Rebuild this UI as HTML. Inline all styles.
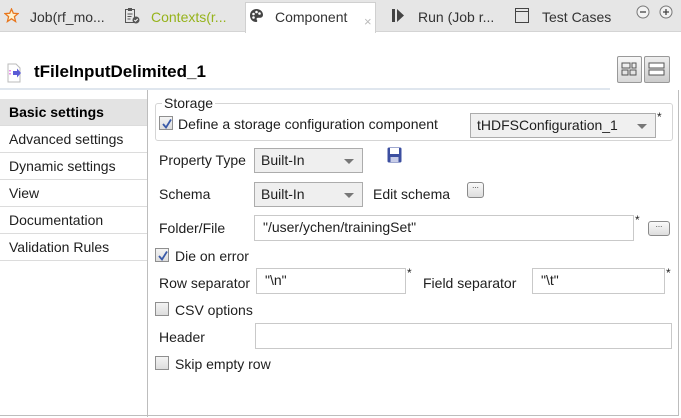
<!DOCTYPE html>
<html><head><style>
*{margin:0;padding:0;box-sizing:border-box}
body{width:681px;height:418px;background:#fff;font-family:"Liberation Sans",sans-serif;font-size:14px;color:#1e1e1e;position:relative;overflow:hidden}
.a{position:absolute;white-space:nowrap}
.tl{line-height:16px}
.inp{position:absolute;border:1px solid #c9c9c9;background:#fff;padding-left:8px;line-height:22px}
.cmb{position:absolute;border:1px solid #acacac;background:#efefef;padding-left:6px;line-height:22px}
.cmb:after{content:"";position:absolute;right:8px;top:10px;border-left:5px solid transparent;border-right:5px solid transparent;border-top:5px solid #777}
.cb{position:absolute;width:14px;height:14px;border:1px solid #8f8f8f;background:linear-gradient(#f4f4f4,#ddd)}
.cb svg{position:absolute;left:1px;top:1px}
.btn{position:absolute;border:1px solid #8a8a8a;border-radius:3px;background:linear-gradient(#fafafa,#ddd);font-size:8px;line-height:6px;text-align:center;color:#333}
.li{position:absolute;left:0;width:147px;height:27px;border-bottom:1px solid #dcdcdc;padding-left:9px;line-height:26px}
</style></head><body>
<!-- tab bar -->
<div class="a" style="left:0;top:0;width:681px;height:32px;background:#e6e6e6;border-bottom:1px solid #d4d4d4"></div>
<div class="a" style="left:245px;top:2px;width:131px;height:31px;background:#fff;border:1px solid #d0d0d0;border-bottom:none"></div>
<svg class="a" style="left:4px;top:8px" width="15" height="15" viewBox="0 0 15 15"><path d="M7.5 1 L9.3 5.3 L14 5.6 L10.4 8.6 L11.6 13.5 L7.5 10.8 L3.4 13.5 L4.6 8.6 L1 5.6 L5.7 5.3 Z" fill="#fff3d0" stroke="#e8771e" stroke-width="1.3"/></svg>
<div class="a tl" style="left:30px;top:9px;color:#333">Job(rf_mo...</div>
<svg class="a" style="left:124px;top:7px" width="16" height="17" viewBox="0 0 16 17"><rect x="1.5" y="2.5" width="9" height="13" fill="none" stroke="#555"/><rect x="4" y="1" width="4" height="3" fill="#555"/><path d="M3.5 7h5M3.5 9.5h4M3.5 12h3" stroke="#555"/><circle cx="12" cy="13" r="3.5" fill="#555"/><path d="M10.3 13l1.2 1.2 2.2-2.3" stroke="#fff" fill="none"/></svg>
<div class="a tl" style="left:151px;top:9px;color:#96b31c">Contexts(r...</div>
<svg class="a" style="left:249px;top:8px" width="15" height="15" viewBox="0 0 15 15"><path d="M7.5 1C3.5 1 1 4 1 7.5S3.5 14 7 14c1.5 0 1.5-1.3.8-2.2-.7-.9 0-2 1.2-2h2c2 0 3-1.3 3-3C14 3.5 11 1 7.5 1z" fill="#444"/><circle cx="4.5" cy="6" r="1.3" fill="#fff"/><circle cx="7.5" cy="4" r="1.3" fill="#fff"/><circle cx="10.5" cy="5.5" r="1.3" fill="#fff"/><circle cx="4.5" cy="9.5" r="1.3" fill="#fff"/></svg>
<div class="a tl" style="left:275px;top:9px;color:#333">Component</div>
<div class="a" style="left:364px;top:14px;color:#bbb;font-size:13px">×</div>
<svg class="a" style="left:392px;top:9px" width="13" height="13" viewBox="0 0 13 13"><rect x="0" y="0" width="3" height="13" fill="#444"/><path d="M5 0 L12 6.5 L5 13Z" fill="#444"/></svg>
<div class="a tl" style="left:418px;top:9px;color:#333">Run (Job r...</div>
<svg class="a" style="left:515px;top:8px" width="14" height="15" viewBox="0 0 14 15"><rect x="0.5" y="0.5" width="13" height="14" fill="none" stroke="#444"/><path d="M0.5 3.5h13" stroke="#444"/></svg>
<div class="a tl" style="left:542px;top:9px;color:#333">Test Cases</div>
<svg class="a" style="left:636px;top:5px" width="40" height="14" viewBox="0 0 40 14"><circle cx="7" cy="7" r="6" fill="#f2f2f2" stroke="#777"/><path d="M4 7h6" stroke="#444" stroke-width="1.3"/><circle cx="30" cy="7" r="6" fill="#f2f2f2" stroke="#777"/><path d="M27 7h6M30 4v6" stroke="#444" stroke-width="1.3"/></svg>
<!-- title -->
<svg class="a" style="left:7px;top:63px" width="16" height="20" viewBox="0 0 16 20"><path d="M1 1h8l4 4v14H1z" fill="#fff" stroke="#bbb"/><path d="M3 7v6" stroke="#e040e0" stroke-width="1.2" stroke-dasharray="1.5 1.5"/><path d="M6 8h4V5.5L14 10l-4 4.5V12H6z" fill="#5b5bd6"/></svg>
<div class="a" style="left:34px;top:62px;font-size:17px;font-weight:bold;color:#000">tFileInputDelimited_1</div>
<div class="a" style="left:0;top:88px;width:610px;height:2px;background:#dfe6ee"></div>
<div class="a" style="left:617px;top:56px;width:25px;height:27px;border:1px solid #999;border-radius:2px;background:linear-gradient(#f8f8f8,#d8d8d8)"><svg width="23" height="25" viewBox="0 0 23 25"><rect x="4" y="6" width="8" height="5" fill="none" stroke="#555"/><rect x="14" y="6" width="4" height="5" fill="none" stroke="#555"/><rect x="4" y="13" width="6" height="5" fill="none" stroke="#555"/><rect x="12" y="13" width="6" height="5" fill="none" stroke="#555"/></svg></div>
<div class="a" style="left:644px;top:56px;width:26px;height:27px;border:1px solid #999;border-radius:2px;background:linear-gradient(#eee,#ccc)"><svg width="24" height="25" viewBox="0 0 24 25"><rect x="4" y="6" width="15" height="5" fill="#fff" stroke="#555"/><rect x="4" y="13" width="15" height="5" fill="#fff" stroke="#555"/></svg></div>
<!-- left list -->
<div class="a" style="left:147px;top:90px;width:1px;height:327px;background:#bdbdbd"></div>
<div class="a" style="left:0;top:415px;width:679px;height:1px;background:#bdbdbd"></div>
<div class="a" style="left:678px;top:90px;width:1px;height:326px;background:#bdbdbd"></div>
<div class="li" style="top:99px;background:#e3e3e3;font-weight:bold;color:#000">Basic settings</div>
<div class="li" style="top:126px">Advanced settings</div>
<div class="li" style="top:153px">Dynamic settings</div>
<div class="li" style="top:180px">View</div>
<div class="li" style="top:207px">Documentation</div>
<div class="li" style="top:234px">Validation Rules</div>
<!-- storage -->
<div class="a" style="left:155px;top:103px;width:518px;height:38px;border:1px solid #d5d5d5;border-radius:3px"></div>
<div class="a tl" style="left:162px;top:95px;background:#fff;padding:0 2px">Storage</div>
<div class="cb" style="left:159px;top:116px"><svg width="12" height="12"><path d="M2 6l3 3.5 5-8" stroke="#3a5aa8" stroke-width="1.8" fill="none"/></svg></div>
<div class="a tl" style="left:178px;top:116px">Define a storage configuration component</div>
<div class="cmb" style="left:470px;top:113px;width:186px;height:25px;background:#f0f0f0">tHDFSConfiguration_1</div>
<div class="a" style="left:657px;top:110px;font-size:12px">*</div>
<div class="a tl" style="left:159px;top:152px">Property Type</div>
<div class="cmb" style="left:254px;top:148px;width:109px;height:25px">Built-In</div>
<svg class="a" style="left:387px;top:147px" width="15" height="16" viewBox="0 0 15 16"><rect x="0.5" y="0.5" width="14" height="15" rx="1.5" fill="#3c4fa0"/><rect x="3" y="1" width="9" height="6" fill="#fff"/><rect x="3.5" y="10" width="8" height="5" fill="#c8cde8"/></svg>
<div class="a tl" style="left:159px;top:186px">Schema</div>
<div class="cmb" style="left:254px;top:182px;width:109px;height:25px">Built-In</div>
<div class="a tl" style="left:373px;top:186px">Edit schema</div>
<div class="btn" style="left:467px;top:182px;width:17px;height:16px">...</div>
<div class="a tl" style="left:159px;top:220px">Folder/File</div>
<div class="inp" style="left:254px;top:215px;width:380px;height:26px">"/user/ychen/trainingSet"</div>
<div class="a" style="left:635px;top:213px;font-size:12px">*</div>
<div class="btn" style="left:648px;top:221px;width:22px;height:15px">...</div>
<div class="cb" style="left:155px;top:248px"><svg width="12" height="12"><path d="M2 6l3 3.5 5-8" stroke="#3a5aa8" stroke-width="1.8" fill="none"/></svg></div>
<div class="a tl" style="left:175px;top:248px">Die on error</div>
<div class="a tl" style="left:159px;top:275px">Row separator</div>
<div class="inp" style="left:256px;top:268px;width:150px;height:26px">"\n"</div>
<div class="a" style="left:407px;top:266px;font-size:12px">*</div>
<div class="a tl" style="left:423px;top:275px">Field separator</div>
<div class="inp" style="left:532px;top:268px;width:133px;height:26px">"\t"</div>
<div class="a" style="left:666px;top:266px;font-size:12px">*</div>
<div class="cb" style="left:155px;top:302px"></div>
<div class="a tl" style="left:175px;top:302px">CSV options</div>
<div class="a tl" style="left:159px;top:329px">Header</div>
<div class="inp" style="left:255px;top:323px;width:417px;height:26px"></div>
<div class="cb" style="left:155px;top:356px"></div>
<div class="a tl" style="left:175px;top:356px">Skip empty row</div>
</body></html>
